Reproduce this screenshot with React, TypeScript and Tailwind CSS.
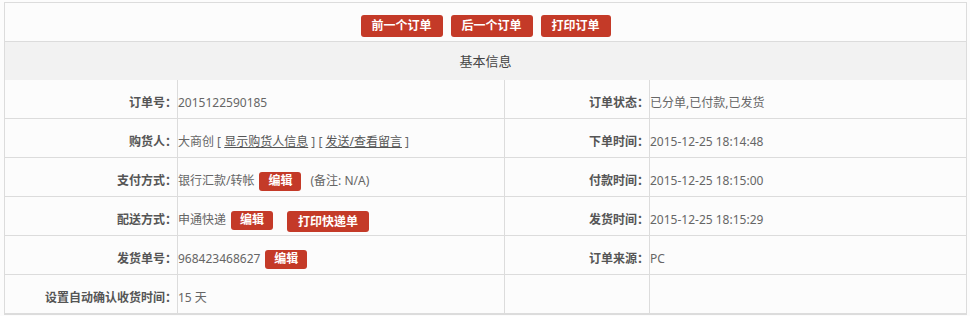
import React from "react";

const font = { fontFamily: '"Noto Sans", "Noto Sans CJK SC", sans-serif' };

function RedButton({ text, w, h }: { text: string; w: string; h: string }) {
  return (
    <button
      className={`${w} ${h} shrink-0 rounded-[3px] bg-[#c43a28] text-[12px] font-bold leading-none text-white`}
    >
      {text}
    </button>
  );
}

type Row = {
  label: string;
  value: React.ReactNode;
  label2: string;
  value2: string;
};

const rows: Row[] = [
  {
    label: "订单号：",
    value: "2015122590185",
    label2: "订单状态：",
    value2: "已分单,已付款,已发货",
  },
  {
    label: "购货人：",
    value: (
      <span>
        大商创 [ <a className="underline text-[#555]">显示购货人信息</a> ] [{" "}
        <a className="underline text-[#555]">发送/查看留言</a> ]
      </span>
    ),
    label2: "下单时间：",
    value2: "2015-12-25 18:14:48",
  },
  {
    label: "支付方式：",
    value: (
      <>
        <span>银行汇款/转帐</span>
        <span className="ml-[5px] flex">
          <RedButton text="编辑" w="w-[42px]" h="h-[19px]" />
        </span>
        <span className="ml-[9px]">(备注: N/A)</span>
      </>
    ),
    label2: "付款时间：",
    value2: "2015-12-25 18:15:00",
  },
  {
    label: "配送方式：",
    value: (
      <>
        <span>申通快递</span>
        <span className="ml-[5px] flex">
          <RedButton text="编辑" w="w-[42px]" h="h-[19px]" />
        </span>
        <span className="ml-[14px] mt-[3px] flex">
          <RedButton text="打印快递单" w="w-[82px]" h="h-[21px]" />
        </span>
      </>
    ),
    label2: "发货时间：",
    value2: "2015-12-25 18:15:29",
  },
  {
    label: "发货单号：",
    value: (
      <>
        <span>968423468627</span>
        <span className="ml-[5px] flex">
          <RedButton text="编辑" w="w-[42px]" h="h-[19px]" />
        </span>
      </>
    ),
    label2: "订单来源：",
    value2: "PC",
  },
  {
    label: "设置自动确认收货时间：",
    value: "15 天",
    label2: "",
    value2: "",
  },
];

export default function App() {
  return (
    <div className="min-h-[316px] bg-[#fcfcfc] pt-[2px] pl-[4px]" style={font}>
      <div className="w-[963px] border border-[#dcdcdc] bg-[#fcfcfc] text-[12px] text-[#666]">
        <div className="flex h-[39px] justify-center gap-[8px] border-b border-[#dcdcdc] pt-[12px]">
          <RedButton text="前一个订单" w="w-[82px]" h="h-[22px]" />
          <RedButton text="后一个订单" w="w-[82px]" h="h-[22px]" />
          <RedButton text="打印订单" w="w-[70px]" h="h-[22px]" />
        </div>
        <div className="flex h-[38px] items-center justify-center bg-[#f2f2f2] pt-[2px] text-[13px] text-[#444]">
          基本信息
        </div>
        {rows.map((r) => (
          <div
            key={r.label}
            className="grid h-[39px] grid-cols-[173px_327px_145px_1fr] border-b border-[#dcdcdc]"
          >
            <div className="flex items-center justify-end border-r border-[#dcdcdc] pt-[8px] font-bold text-[#555]">
              {r.label}
            </div>
            <div className="flex items-center border-r border-[#dcdcdc] pt-[8px] whitespace-nowrap">
              {r.value}
            </div>
            <div className="flex items-center justify-end border-r border-[#dcdcdc] pt-[8px] font-bold text-[#555]">
              {r.label2}
            </div>
            <div className="flex items-center pt-[8px]">{r.value2}</div>
          </div>
        ))}
      </div>
    </div>
  );
}
